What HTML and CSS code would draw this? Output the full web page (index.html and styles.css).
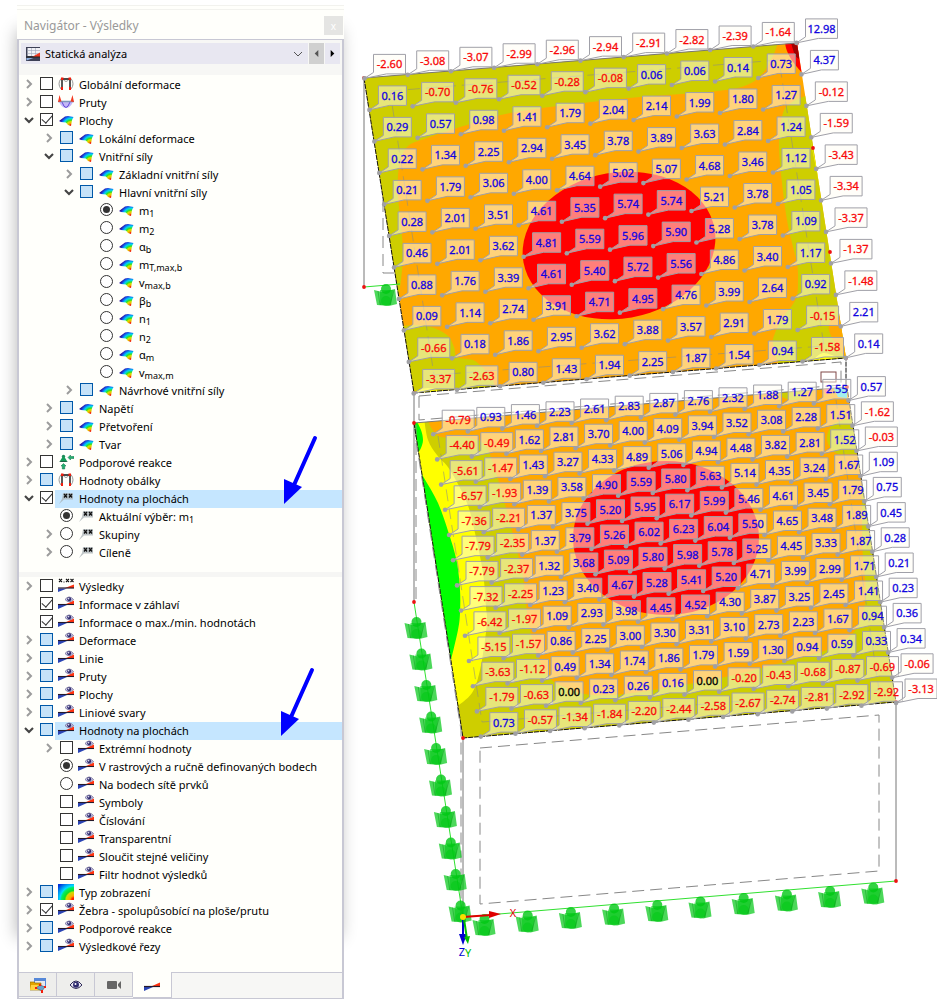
FILE: index.html
```html
<!DOCTYPE html>
<html lang="cs">
<head>
<meta charset="utf-8">
<title>Navigátor - Výsledky</title>
<link rel="stylesheet" href="styles.css">
</head>
<body>
<svg class="defs" aria-hidden="true">
  <defs>
    <radialGradient id="rain" gradientUnits="userSpaceOnUse" cx="13" cy="14" r="12">
      <stop offset=".1" stop-color="#f01000"/><stop offset=".2" stop-color="#f0a000"/><stop offset=".36" stop-color="#d8e000"/><stop offset=".48" stop-color="#30e020"/><stop offset=".64" stop-color="#00d8f0"/><stop offset=".8" stop-color="#1060f0"/><stop offset=".95" stop-color="#2a10a0"/>
    </radialGradient>
    <radialGradient id="corner" cx="1" cy="1" r="1.3">
      <stop offset=".1" stop-color="#f20"/><stop offset=".2" stop-color="#fa0"/><stop offset=".38" stop-color="#cd0"/><stop offset=".45" stop-color="#1d2"/><stop offset=".6" stop-color="#0e6"/><stop offset=".68" stop-color="#0df"/><stop offset="1" stop-color="#03d"/>
    </radialGradient>
    <symbol id="right" viewBox="0 0 10 10"><path d="M3 1l4 4-4 4" fill="none" stroke="#9c9c9c" stroke-width="2"/></symbol>
    <symbol id="down" viewBox="0 0 10 10"><path d="M1 3l4 4 4-4" fill="none" stroke="#444" stroke-width="2.1"/></symbol>
    <symbol id="surf" viewBox="0 0 16 16"><path d="M1 9L7 4.500 10 4l5.500 1L14 8l-1 6-3-1-2-2.500L3 10z" fill="url(#rain)"/></symbol>
    <symbol id="frame" viewBox="0 0 16 16"><path d="M3 2.500Q-1 8 3 13M13 2.500Q17 8 13 13M5 3q3 5 6 0" fill="none" stroke="#999"/><path d="M4 13V3h8v10" fill="none" stroke="#111" stroke-width="1.400"/><path d="M3 1.500h2.500v2.500H3zM10.500 1.500H13v2.500h-2.500zM3 11h2v3H3zM11 11h2v3h-2z" fill="#f21d0d"/></symbol>
    <symbol id="beam" viewBox="0 0 16 16"><path d="M1 8h14Q12 14 8 14T1 8z" fill="#c4b8f8"/><path d="M4 8q4 11 8 0" fill="none" stroke="#6347d8"/><path d="M0 7.500h16" stroke="#7d97ba" stroke-width="1.500"/><path d="M0 8L1.500 1l2 6.500zM12.500 7.500L14.500 1 16 8z" fill="#f43a20"/></symbol>
    <symbol id="support" viewBox="0 0 16 16"><circle cx="5.500" cy="2.500" r="1.700" fill="#1e8c58"/><path d="M4.500 3h2l2.500 4H2z" fill="#159b58"/><path d="M1 8l1.500-1h6L10 8z" fill="#1e6446"/><path d="M5.500 9.500L8 12H6.700v3H4.300v-3H3zM10 3.500L12.500 1v1.500H16v2h-3.500V6z" fill="#22b070" stroke="#0c7045" stroke-width=".5"/></symbol>
    <symbol id="pin" viewBox="0 0 16 16"><path d="M5 3h10v6.500H6L1 14l3-5z" fill="#a8b0b4" opacity=".75"/><path d="M6 4l3 3.500m0-3.500L6 7.500M11 4l3 3.500m0-3.500l-3 3.500" stroke="#111" stroke-width="1.300"/></symbol>
    <symbol id="wedge" viewBox="0 0 16 16"><path d="M0 10h9l-9 4z" fill="#2a44b4"/><path d="M7 9.500l9-4v4z" fill="#ff3210"/><path d="M0 9.500h16" stroke="#261a2a" stroke-width="1.200"/></symbol>
    <symbol id="eyewedge" viewBox="0 0 16 16"><path d="M0 9h9l-9 4z" fill="#2a44b4"/><path d="M7 8.500l9-4v4z" fill="#ff3210"/><path d="M0 8.500h16" stroke="#261a2a" stroke-width="1.100"/><path d="M7 3.500q4-5 8.500 0-4.500 4.500-8.500 0z" fill="#d5d0ef" stroke="#6a6690" stroke-width=".8"/><circle cx="11.200" cy="3.300" r="2" fill="#302c70"/><circle cx="10.700" cy="2.800" r=".7" fill="#fff"/></symbol>
    <symbol id="xwedge" viewBox="0 0 16 16"><path d="M0 10.500h9l-9 3.500z" fill="#2a44b4"/><path d="M7 10l9-3.500V10z" fill="#ff3210"/><path d="M0 10h16" stroke="#261a2a" stroke-width="1.200"/><path d="M1 1l3 3m0-3L1 4M8 1l3 3m0-3L8 4M12.500 1l3 3m0-3l-3 3M5.500 4h1" stroke="#111" stroke-width="1.100"/></symbol>
    <symbol id="spectrum" viewBox="0 0 16 16"><path d="M0 0h16v16H0z" fill="url(#corner)"/></symbol>
    <symbol id="eye" viewBox="0 0 16 16"><path d="M2 8q6-8 12 0-6 7-12 0z" fill="#eceaf6" stroke="#302c58"/><circle cx="8" cy="7.700" r="3" fill="#302c70"/><circle cx="7.500" cy="7" r="1" fill="#fff"/></symbol>
    <symbol id="camera" viewBox="0 0 16 16"><path d="M1 5q0-1 1-1h8q1 0 1 1v6q0 1-1 1H2q-1 0-1-1zM12 7l3-3v8l-3-3z" fill="#666"/></symbol>
    <symbol id="project" viewBox="0 0 16 16"><path d="M4 1h12v10H4z" fill="#5688d8"/><path d="M5 4h10v6H5z" fill="#e8e8ee"/><path d="M0 5h4l1 1h6v7H0z" fill="#e2a400" stroke="#9a7200" stroke-width=".7"/><path d="M1 8h10l-1 5H0z" fill="#ffd240"/><path d="M6 11l4-3 5 2-3 4z" fill="#6ba3cc" stroke="#456" stroke-width=".6"/><path d="M9 7h2v2H9zM14 9h2v2h-2zM5 10h2v2H5zM11 13h2v3h-2z" fill="#f21d0d"/></symbol>
    <symbol id="analysis" viewBox="0 0 16 16"><path d="M1 1h14v14H1z" fill="#3d4055"/><path d="M2.500 2H15v8H2.500z" fill="#f1f1f6"/><path d="M2.500 4.500H15M2.500 7.500H15M6.500 2v8M10.500 2v8" stroke="#a0a8bc" stroke-width=".6"/><path d="M7 11l8-4.500V11z" fill="#f03820"/><path d="M1 11h14" stroke="#222"/><path d="M1.500 12h7l-7 2.500z" fill="#8fb0e0"/></symbol>
  </defs>
</svg>
<aside class="panel">
  <header class="title"><h1>Navigátor - Výsledky</h1><button class="close" aria-label="Zavřít">x</button></header>
  <div class="frame">
    <div class="toolbar">
      <div class="combo"><svg class="icon"><use href="#analysis"/></svg><select aria-label="Typ výsledků"><option>Statická analýza</option></select><svg class="caret" viewBox="0 0 10 10"><path d="M1 3l4 4 4-4" fill="none" stroke="#555"/></svg></div>
      <button class="step off" aria-label="Předchozí"><svg viewBox="0 0 10 10"><path d="M7 1v8L3 5z" fill="#555"/></svg></button>
      <button class="step" aria-label="Další"><svg viewBox="0 0 10 10"><path d="M3 1v8l4-4z" fill="#000"/></svg></button>
    </div>
    <ul class="tree upper">
      <li><div class="row"><button class="tw" aria-label="Rozbalit"><svg><use href="#right"/></svg></button><label><input type="checkbox"><span class="cap"><svg class="icon"><use href="#frame"/></svg>Globální deformace</span></label></div></li>
      <li><div class="row"><button class="tw" aria-label="Rozbalit"><svg><use href="#right"/></svg></button><label><input type="checkbox"><span class="cap"><svg class="icon"><use href="#beam"/></svg>Pruty</span></label></div></li>
      <li><div class="row"><button class="tw" aria-label="Sbalit"><svg><use href="#down"/></svg></button><label><input type="checkbox" checked><span class="cap"><svg class="icon"><use href="#surf"/></svg>Plochy</span></label></div>
        <ul>
          <li><div class="row"><button class="tw" aria-label="Rozbalit"><svg><use href="#right"/></svg></button><label><input type="checkbox" class="part"><span class="cap"><svg class="icon"><use href="#surf"/></svg>Lokální deformace</span></label></div></li>
          <li><div class="row"><button class="tw" aria-label="Sbalit"><svg><use href="#down"/></svg></button><label><input type="checkbox" class="part"><span class="cap"><svg class="icon"><use href="#surf"/></svg>Vnitřní síly</span></label></div>
            <ul>
              <li><div class="row"><button class="tw" aria-label="Rozbalit"><svg><use href="#right"/></svg></button><label><input type="checkbox" class="part"><span class="cap"><svg class="icon"><use href="#surf"/></svg>Základní vnitřní síly</span></label></div></li>
              <li><div class="row"><button class="tw" aria-label="Sbalit"><svg><use href="#down"/></svg></button><label><input type="checkbox" class="part"><span class="cap"><svg class="icon"><use href="#surf"/></svg>Hlavní vnitřní síly</span></label></div>
                <ul>
                  <li><div class="row leaf"><label><input type="radio" name="force" checked><span class="cap"><svg class="icon"><use href="#surf"/></svg><span>m<sub>1</sub></span></span></label></div></li>
                  <li><div class="row leaf"><label><input type="radio" name="force"><span class="cap"><svg class="icon"><use href="#surf"/></svg><span>m<sub>2</sub></span></span></label></div></li>
                  <li><div class="row leaf"><label><input type="radio" name="force"><span class="cap"><svg class="icon"><use href="#surf"/></svg><span>α<sub>b</sub></span></span></label></div></li>
                  <li><div class="row leaf"><label><input type="radio" name="force"><span class="cap"><svg class="icon"><use href="#surf"/></svg><span>m<sub>T,max,b</sub></span></span></label></div></li>
                  <li><div class="row leaf"><label><input type="radio" name="force"><span class="cap"><svg class="icon"><use href="#surf"/></svg><span>v<sub>max,b</sub></span></span></label></div></li>
                  <li><div class="row leaf"><label><input type="radio" name="force"><span class="cap"><svg class="icon"><use href="#surf"/></svg><span>β<sub>b</sub></span></span></label></div></li>
                  <li><div class="row leaf"><label><input type="radio" name="force"><span class="cap"><svg class="icon"><use href="#surf"/></svg><span>n<sub>1</sub></span></span></label></div></li>
                  <li><div class="row leaf"><label><input type="radio" name="force"><span class="cap"><svg class="icon"><use href="#surf"/></svg><span>n<sub>2</sub></span></span></label></div></li>
                  <li><div class="row leaf"><label><input type="radio" name="force"><span class="cap"><svg class="icon"><use href="#surf"/></svg><span>α<sub>m</sub></span></span></label></div></li>
                  <li><div class="row leaf"><label><input type="radio" name="force"><span class="cap"><svg class="icon"><use href="#surf"/></svg><span>v<sub>max,m</sub></span></span></label></div></li>
                </ul>
              </li>
              <li><div class="row"><button class="tw" aria-label="Rozbalit"><svg><use href="#right"/></svg></button><label><input type="checkbox" class="part"><span class="cap"><svg class="icon"><use href="#surf"/></svg>Návrhové vnitřní síly</span></label></div></li>
            </ul>
          </li>
          <li><div class="row"><button class="tw" aria-label="Rozbalit"><svg><use href="#right"/></svg></button><label><input type="checkbox" class="part"><span class="cap"><svg class="icon"><use href="#surf"/></svg>Napětí</span></label></div></li>
          <li><div class="row"><button class="tw" aria-label="Rozbalit"><svg><use href="#right"/></svg></button><label><input type="checkbox" class="part"><span class="cap"><svg class="icon"><use href="#surf"/></svg>Přetvoření</span></label></div></li>
          <li><div class="row"><button class="tw" aria-label="Rozbalit"><svg><use href="#right"/></svg></button><label><input type="checkbox" class="part"><span class="cap"><svg class="icon"><use href="#surf"/></svg>Tvar</span></label></div></li>
        </ul>
      </li>
      <li><div class="row"><button class="tw" aria-label="Rozbalit"><svg><use href="#right"/></svg></button><label><input type="checkbox"><span class="cap"><svg class="icon"><use href="#support"/></svg>Podporové reakce</span></label></div></li>
      <li><div class="row"><button class="tw" aria-label="Rozbalit"><svg><use href="#right"/></svg></button><label><input type="checkbox" class="part"><span class="cap"><svg class="icon"><use href="#frame"/></svg>Hodnoty obálky</span></label></div></li>
      <li><div class="row picked"><button class="tw" aria-label="Sbalit"><svg><use href="#down"/></svg></button><label><input type="checkbox" checked><span class="cap"><svg class="icon"><use href="#pin"/></svg>Hodnoty na plochách</span></label></div>
        <ul>
          <li><div class="row leaf"><label><input type="radio" name="values" checked><span class="cap"><svg class="icon"><use href="#pin"/></svg><span>Aktuální výběr: m<sub>1</sub></span></span></label></div></li>
          <li><div class="row"><button class="tw" aria-label="Rozbalit"><svg><use href="#right"/></svg></button><label><input type="radio" name="values"><span class="cap"><svg class="icon"><use href="#pin"/></svg>Skupiny</span></label></div></li>
          <li><div class="row"><button class="tw" aria-label="Rozbalit"><svg><use href="#right"/></svg></button><label><input type="radio" name="values"><span class="cap"><svg class="icon"><use href="#pin"/></svg>Cíleně</span></label></div></li>
        </ul>
      </li>
    </ul>
    <ul class="tree lower">
      <li><div class="row"><button class="tw" aria-label="Rozbalit"><svg><use href="#right"/></svg></button><label><input type="checkbox"><span class="cap"><svg class="icon"><use href="#xwedge"/></svg>Výsledky</span></label></div></li>
      <li><div class="row leaf"><label><input type="checkbox" checked><span class="cap"><svg class="icon"><use href="#eyewedge"/></svg>Informace v záhlaví</span></label></div></li>
      <li><div class="row leaf"><label><input type="checkbox" checked><span class="cap"><svg class="icon"><use href="#eyewedge"/></svg>Informace o max./min. hodnotách</span></label></div></li>
      <li><div class="row"><button class="tw" aria-label="Rozbalit"><svg><use href="#right"/></svg></button><label><input type="checkbox" class="part"><span class="cap"><svg class="icon"><use href="#eyewedge"/></svg>Deformace</span></label></div></li>
      <li><div class="row"><button class="tw" aria-label="Rozbalit"><svg><use href="#right"/></svg></button><label><input type="checkbox" class="part"><span class="cap"><svg class="icon"><use href="#eyewedge"/></svg>Linie</span></label></div></li>
      <li><div class="row"><button class="tw" aria-label="Rozbalit"><svg><use href="#right"/></svg></button><label><input type="checkbox" class="part"><span class="cap"><svg class="icon"><use href="#eyewedge"/></svg>Pruty</span></label></div></li>
      <li><div class="row"><button class="tw" aria-label="Rozbalit"><svg><use href="#right"/></svg></button><label><input type="checkbox" class="part"><span class="cap"><svg class="icon"><use href="#eyewedge"/></svg>Plochy</span></label></div></li>
      <li><div class="row"><button class="tw" aria-label="Rozbalit"><svg><use href="#right"/></svg></button><label><input type="checkbox" class="part"><span class="cap"><svg class="icon"><use href="#eyewedge"/></svg>Liniové svary</span></label></div></li>
      <li><div class="row picked"><button class="tw" aria-label="Sbalit"><svg><use href="#down"/></svg></button><label><input type="checkbox" class="part"><span class="cap"><svg class="icon"><use href="#eyewedge"/></svg>Hodnoty na plochách</span></label></div>
        <ul>
          <li><div class="row"><button class="tw" aria-label="Rozbalit"><svg><use href="#right"/></svg></button><label><input type="checkbox"><span class="cap"><svg class="icon"><use href="#eyewedge"/></svg>Extrémní hodnoty</span></label></div></li>
          <li><div class="row leaf"><label><input type="radio" name="points" checked><span class="cap"><svg class="icon"><use href="#eyewedge"/></svg>V rastrových a ručně definovaných bodech</span></label></div></li>
          <li><div class="row leaf"><label><input type="radio" name="points"><span class="cap"><svg class="icon"><use href="#eyewedge"/></svg>Na bodech sítě prvků</span></label></div></li>
          <li><div class="row leaf"><label><input type="checkbox"><span class="cap"><svg class="icon"><use href="#eyewedge"/></svg>Symboly</span></label></div></li>
          <li><div class="row leaf"><label><input type="checkbox"><span class="cap"><svg class="icon"><use href="#eyewedge"/></svg>Číslování</span></label></div></li>
          <li><div class="row leaf"><label><input type="checkbox"><span class="cap"><svg class="icon"><use href="#eyewedge"/></svg>Transparentní</span></label></div></li>
          <li><div class="row leaf"><label><input type="checkbox"><span class="cap"><svg class="icon"><use href="#eyewedge"/></svg>Sloučit stejné veličiny</span></label></div></li>
          <li><div class="row leaf"><label><input type="checkbox"><span class="cap"><svg class="icon"><use href="#eyewedge"/></svg>Filtr hodnot výsledků</span></label></div></li>
        </ul>
      </li>
      <li><div class="row"><button class="tw" aria-label="Rozbalit"><svg><use href="#right"/></svg></button><label><input type="checkbox" class="part"><span class="cap"><svg class="icon"><use href="#spectrum"/></svg>Typ zobrazení</span></label></div></li>
      <li><div class="row"><button class="tw" aria-label="Rozbalit"><svg><use href="#right"/></svg></button><label><input type="checkbox" checked><span class="cap"><svg class="icon"><use href="#eyewedge"/></svg>Žebra - spolupůsobící na ploše/prutu</span></label></div></li>
      <li><div class="row"><button class="tw" aria-label="Rozbalit"><svg><use href="#right"/></svg></button><label><input type="checkbox" class="part"><span class="cap"><svg class="icon"><use href="#eyewedge"/></svg>Podporové reakce</span></label></div></li>
      <li><div class="row"><button class="tw" aria-label="Rozbalit"><svg><use href="#right"/></svg></button><label><input type="checkbox" class="part"><span class="cap"><svg class="icon"><use href="#eyewedge"/></svg>Výsledkové řezy</span></label></div></li>
    </ul>
    <nav class="tabs">
      <button aria-label="Data"><svg class="icon"><use href="#project"/></svg></button>
      <button aria-label="Zobrazit"><svg class="icon"><use href="#eye"/></svg></button>
      <button aria-label="Pohledy"><svg class="icon"><use href="#camera"/></svg></button>
      <button aria-label="Výsledky" class="active"><svg class="icon"><use href="#wedge"/></svg></button>
    </nav>
  </div>
  <svg class="pointer first" viewBox="0 0 34 70"><path d="M31 3L10 50" stroke="#00f" stroke-width="4" stroke-linecap="round"/><path d="M0 69V44l18 8z" fill="#00f"/></svg>
  <svg class="pointer second" viewBox="0 0 34 70"><path d="M31 3L10 50" stroke="#00f" stroke-width="4" stroke-linecap="round"/><path d="M0 69V44l18 8z" fill="#00f"/></svg>
</aside>
<main class="stage"><svg id="model" viewBox="344 0 593 1003" role="img" aria-label="Ohybové momenty m1 na plochách"></svg></main>
<script src="model.js"></script>
</body>
</html>
```

FILE: styles.css
```css
* { box-sizing: border-box; }
body {
  margin: 0;
  display: flex;
  align-items: flex-start;
  background: #fff;
  color: #000;
  font: 11px/18px "Noto Sans", "Open Sans", sans-serif;
}
button { border: 0; padding: 0; background: none; font: inherit; }
.defs { position: absolute; width: 0; height: 0; }

.panel {
  position: relative;
  flex: 0 0 327px;
  margin: 5px 0 0 17px;
  border-top: 1px solid #f2f2ee;
  background: #fffffb;
}
.panel::before {
  content: "";
  position: absolute;
  z-index: -1;
  inset: 24px 4px 62px 0;
  box-shadow: 0 0 16px rgba(0, 0, 0, .3);
}
.title {
  display: flex;
  justify-content: space-between;
  align-items: center;
  margin-top: 3px;
  border-top: 1px solid #f2f2ee;
  padding: 6px 1px 4px 7px;
}
.title h1 { margin: 0; font-size: 12px; font-weight: 400; line-height: 17px; color: #999; }
.close { width: 19px; height: 19px; background: #e5e5e3; color: #fff; font-size: 10px; line-height: 16px; }

.frame { border: 2px solid #c8c8d4; border-width: 1px 2px 1px 2px; }
.toolbar { display: flex; gap: 1px; padding: 3px 2px 11px; background: #f7f7f5; }
.combo { display: flex; align-items: center; flex: 1; height: 21px; padding: 0 5px 0 4px; gap: 4px; background: #e8e7f1; }
.combo select { flex: 1; appearance: none; border: 0; padding: 0; background: none; color: #000; font: inherit; }
.caret { width: 10px; height: 10px; }
.step { display: grid; place-items: center; width: 15px; height: 21px; background: #e8e7f1; }
.step.off { background: #d0d0d0; }
.step svg { width: 9px; height: 9px; }

.icon { flex: none; width: 16px; height: 16px; }
.tree, .tree ul { margin: 0; padding: 0; list-style: none; }
.tree ul { padding-left: 20px; }
.upper { padding: 1px 0 10px; }
.lower { padding: 1px 0 16px; border-top: 5px solid #f6f6f4; }
.row { display: flex; height: 18px; }
.leaf { padding-left: 21px; }
.tw { display: grid; place-items: center; width: 20px; height: 16px; margin-right: 1px; }
.tw svg { width: 10px; height: 10px; }
.row label { display: flex; flex: 1; }
.row input { appearance: none; flex: none; display: grid; place-items: center; width: 13px; height: 13px; margin: 1px 2px 0 0; border: 1px solid #333; background: #fff; }
.row input[type="radio"] { border-radius: 50%; }
.row input[type="radio"]:checked::after { content: ""; width: 7px; height: 7px; border-radius: 50%; background: #333; }
.row input[type="checkbox"]:checked::after { content: ""; width: 9px; height: 5px; margin-bottom: 3px; border: solid #333; border-width: 0 0 1px 1px; transform: rotate(-48deg); }
.row input.part { border-color: #0058a8; background: #c5e2f8; }
.cap { display: flex; align-items: center; flex: 1; gap: 5px; padding-left: 3px; white-space: nowrap; line-height: 18px; }
.cap .icon { margin-bottom: 2px; }
.picked .cap { background: #c5e6ff; }
sub { font-size: 9px; line-height: 0; vertical-align: -2px; }

.tabs { display: flex; border-top: 1px solid #c8c8d4; background: #f7f7f5; height: 26px; }
.tabs button { display: grid; place-items: center; width: 38px; height: 24px; border: 1px solid #c8c8d4; border-width: 0 1px 1px 0; background: #eeeeec; }
.tabs .active { width: 39px; height: 26px; margin-top: -1px; background: #fffffb; }

.pointer { position: absolute; width: 34px; height: 70px; }
.first { left: 267px; top: 429px; }
.second { left: 264px; top: 661px; }

.stage { flex: 1; min-width: 0; }
#model { display: block; width: 100%; height: auto; }
#model text { font: 11px "Noto Sans", "Open Sans", sans-serif; text-anchor: middle; }
#model .pos { fill: #1004e0; stroke: #1004e0; }
#model .neg { fill: #f80808; stroke: #f80808; }
#model .zero { fill: #000; stroke: #000; }
#model .value { stroke-width: .3; }
#model .tag { fill: #fffdf4; fill-opacity: .5; stroke: #a0a0a8; }
#model .dash { fill: none; stroke: #888; stroke-dasharray: 12 6; }
#model .faint { fill: none; stroke: #888; stroke-opacity: .55; stroke-dasharray: 12 6; }
#model .line { fill: none; stroke: #777; }
#model .edge { fill: none; stroke: #111; stroke-dasharray: 5 1; }
```

FILE: model.js
```javascript
const NS = "http://www.w3.org/2000/svg";
const model = document.getElementById("model");

function add(name, attrs, parent = model) {
  const node = document.createElementNS(NS, name);
  for (const key in attrs) node.setAttribute(key, attrs[key]);
  parent.append(node);
  return node;
}

const parse = text => text.split(" ").map(pair => pair.split(",").map(Number));

// Curve through all the points (Catmull-Rom to Bezier).
function curve(text, closed) {
  const p = parse(text), n = p.length;
  const at = i => closed ? p[(i + n) % n] : p[Math.max(0, Math.min(n - 1, i))];
  let d = "";
  for (let i = 0; i < (closed ? n : n - 1); i++) {
    const [a, b, c, e] = [at(i - 1), at(i), at(i + 1), at(i + 2)];
    d += `C${b[0] + (c[0] - a[0]) / 6} ${b[1] + (c[1] - a[1]) / 6} ${c[0] - (e[0] - b[0]) / 6} ${c[1] - (e[1] - b[1]) / 6} ${c[0]} ${c[1]}`;
  }
  return `M${p[0]}${d}`;
}

function zone(fill, bow, rest = "", parent = model) {
  add("path", { d: curve(bow, !rest) + (rest ? "L" + rest.split(" ").join("L") : "") + "Z", fill }, parent);
}

function clipped(id, points) {
  add("polygon", { points }, add("clipPath", { id }));
  return add("g", { "clip-path": `url(#${id})` });
}

const OLIVE = "#cece00", ORANGE = "#ffa800", RED = "#ff0000", YELLOW = "#ffff00", GREEN = "#00ff00";

// Upper slab
const upper = clipped("upper", "364,78 797,43 846,358 414,393");
add("rect", { x: 350, y: 30, width: 510, height: 380, fill: ORANGE }, upper);
zone(OLIVE, "398,300 401,280 403,253 401,225 398,195 399,167 407,147 427,138 467,125 510,113 583,103 640,97 717,91 747,85 763,73 773,56 779,40", "350,40 350,300", upper);
zone(OLIVE, "400,326 427,326 447,335 454,347 457,357 473,360 482,367 492,378 497,395", "400,400", upper);
zone(YELLOW, "414,392 428,388 445,392", "414,396", upper);
zone(OLIVE, "808,95 792,102 783,113 779,143 782,183 787,220 792,243 797,263 798,280 796,299 783,317 775,333 773,345 780,368", "860,368 860,95", upper);
zone(ORANGE, "840,316 831,320 829,330 836,345 845,358", "860,358", upper);
zone(YELLOW, "810,138 814,158 822,200 832,268", "840,268", upper);
zone(YELLOW, "812,361 823,353 837,357", "837,362", upper);
zone(RED, "785,43 787,51 793,62 804,75", "806,40", upper);
zone("#a00000", "791,43 795,55 799,59", "799,40", upper);
add("ellipse", { rx: 97, ry: 73, transform: "translate(619 245.500) rotate(-10)", fill: RED });

// Lower slab
const lower = clipped("lower", "414,423 847,387 896,702 463,738");
add("rect", { x: 400, y: 370, width: 510, height: 380, fill: ORANGE }, lower);
zone(OLIVE, "427,418 432,429 441,437 460,437 483,443 493,463 503,497 510,523 517,550 523,577 525,597 530,630 538,657 550,678 564,687 592,695 640,692 720,678 773,665 827,650 853,633 863,612 866,590 863,560 862,523 862,485", "910,485 910,750 400,750 400,418", lower);
zone(YELLOW, "424,418 428,440 437,455 450,470 467,503 475,533 483,573 486,607 487,620 485,640 480,670 472,693 455,708", "400,700 400,418", lower);
zone(GREEN, "416,420 421,430 423,440 421,448 418,453", "400,453 400,420", lower);
zone(GREEN, "416,463 424,478 438,503 450,537 457,563 460,590 460,613 458,630 451,660", "400,660", lower);
zone(OLIVE, "827,440 830,428 838,422 862,420 862,450 846,454 834,452", "", lower);
zone(OLIVE, "778,388 784,398 800,399 809,386", "778,386", lower);
add("path", { d: "M833 387h14v11l-9-1z", fill: "#45dfe8" }, lower);
add("circle", { cx: 828, cy: 390, r: 4, fill: "#ff6c6c" }, lower);
add("ellipse", { cx: 666, cy: 538, rx: 93, ry: 77, fill: RED });

// Outlines and inset lines
const lines = [
  ["line", "364,78 364,287"], ["edge", "364,78 414,393 846,358 846,387"],
  ["line", "364,78 797,43"], ["faint", "390,91 779,60 824,346 434,375 390,91"],
  ["dash", "383,200 383,273 396,273"],
  ["line", "414,393 414,602"], ["dash", "416,425 416,602"],
  ["dash", "419,396 841,362 841,385 419,420 419,396"], ["line", "414,423 847,387"],
  ["faint", "438,436 482,722 879,690 836,400"],
  ["edge", "414,423 463,738 896,702 847,387"],
  ["dash", "416,440 461,730 461,915"],
  ["line", "463,738 463,917"], ["line", "896,702 896,881"],
  ["dash", "480,748 879,715 879,871 480,904 480,748"]
];
for (const [kind, points] of lines) add("polyline", { class: kind, points });
add("rect", { x: 821, y: 372, width: 15, height: 10, fill: "none", stroke: "#804848" });
for (const points of ["364,287 400,284", "414,602 463,917 896,881"])
  add("polyline", { points, fill: "none", stroke: "#30e030" });

// Line supports
function support(x, y) {
  const g = add("g", { transform: `translate(${x} ${y})`, fill: "#00c814" });
  add("path", { d: "M-12-6L-4-4 9-7 11 8 3 10-9 9z", "fill-opacity": .7 }, g);
  add("path", { d: "M-6-6L7-6 5 9-6 9z", "fill-opacity": .6 }, g);
  add("circle", { cy: -7, r: 5, "fill-opacity": .8 }, g);
  add("circle", { cy: 5, r: 5, "fill-opacity": .5 }, g);
  add("path", { d: "M-8-5l2 14M8-6L4 9", stroke: "#079c18", "stroke-opacity": .5 }, g);
}
support(386, 296);
for (let i = 0; i < 10; i++) {
  support(416.5 + 4.9 * i, 629 + 31.5 * i);
  support(484.5 + 43.2 * i, 926 - 3.5 * i);
}
for (const [cx, cy] of parse("364,78 364,287 414,393 414,423 414,602 463,738 896,702 896,881 797,43 846,358 847,387 813,148 830,252"))
  add("circle", { cx, cy, r: 1.9, fill: "#ee1111" });

// Value tags
function tags(values, [x0, y0], [cx, cy], [rx, ry]) {
  values.trim().split("\n").forEach((line, r) => line.trim().split(/\s+/).forEach((value, c) => {
    const x = x0 + cx * c + rx * r, y = y0 + cy * c + ry * r;
    const wide = value.length > 4, w = wide ? 32 : 28;
    add("path", { class: "tag", d: `M${x} ${y}L${x + 9} ${y - 6}V${y - 24}h${w}v19.500h${-w / 2 - 3}Z` });
    add("circle", { cx: x, cy: y, r: 2.3, fill: "#a0a0a4" });
    const kind = value === "0.00" ? "zero" : value[0] === "-" ? "neg" : "pos";
    add("text", { class: "value " + kind, x: x + 9 + w / 2, y: y - 10 }).textContent = value;
  }));
}

tags(`
-2.60 -3.08 -3.07 -2.99 -2.96 -2.94 -2.91 -2.82 -2.39 -1.64 12.98
0.16 -0.70 -0.76 -0.52 -0.28 -0.08 0.06 0.06 0.14 0.73 4.37
0.29 0.57 0.98 1.41 1.79 2.04 2.14 1.99 1.80 1.27 -0.12
0.22 1.34 2.25 2.94 3.45 3.78 3.89 3.63 2.84 1.24 -1.59
0.21 1.79 3.06 4.00 4.64 5.02 5.07 4.68 3.46 1.12 -3.43
0.28 2.01 3.51 4.61 5.35 5.74 5.74 5.21 3.78 1.05 -3.34
0.46 2.01 3.62 4.81 5.59 5.96 5.90 5.28 3.78 1.09 -3.37
0.88 1.76 3.39 4.61 5.40 5.72 5.56 4.86 3.40 1.17 -1.37
0.09 1.14 2.74 3.91 4.71 4.95 4.76 3.99 2.64 0.92 -1.48
-0.66 0.18 1.86 2.95 3.62 3.88 3.57 2.91 1.79 -0.15 2.21
-3.37 -2.63 0.80 1.43 1.94 2.25 1.87 1.54 0.94 -1.58 0.14
`, [364.5, 78.4], [43.2, -3.55], [4.92, 31.5]);

tags(`
-0.79 0.93 1.46 2.23 2.61 2.83 2.87 2.76 2.32 1.88 1.27 2.55 0.57
-4.40 -0.49 1.62 2.81 3.70 4.00 4.09 3.94 3.52 3.08 2.28 1.51 -1.62
-5.61 -1.47 1.43 3.27 4.33 4.89 5.06 4.94 4.48 3.82 2.81 1.52 -0.03
-6.57 -1.93 1.39 3.58 4.90 5.59 5.80 5.63 5.14 4.35 3.24 1.67 1.09
-7.36 -2.21 1.37 3.75 5.20 5.95 6.17 5.99 5.46 4.61 3.45 1.79 0.75
-7.79 -2.35 1.37 3.79 5.26 6.02 6.23 6.04 5.50 4.65 3.48 1.89 0.45
-7.79 -2.37 1.32 3.68 5.09 5.80 5.98 5.78 5.25 4.45 3.33 1.87 0.28
-7.32 -2.25 1.23 3.40 4.67 5.28 5.41 5.20 4.71 3.99 2.99 1.71 0.21
-6.42 -1.97 1.09 2.93 3.98 4.45 4.52 4.30 3.87 3.25 2.45 1.41 0.23
-5.15 -1.57 0.86 2.25 3.00 3.30 3.31 3.10 2.73 2.23 1.67 0.94 0.36
-3.63 -1.12 0.49 1.34 1.74 1.86 1.79 1.59 1.30 0.94 0.59 0.33 0.34
-1.79 -0.63 0.00 0.23 0.26 0.16 0.00 -0.20 -0.43 -0.68 -0.87 -0.69 -0.06
0.73 -0.57 -1.34 -1.84 -2.20 -2.44 -2.58 -2.67 -2.74 -2.81 -2.92 -2.92 -3.13
`, [433.2, 434.2], [34.6, -2.8], [3.97, 25.2]);

// Axis cross
add("path", { d: "M463 917l28-2", stroke: "#e00000", "stroke-width": 2 });
add("path", { d: "M489 911l12 3-12 4z", fill: "#e00000" });
add("path", { d: "M463 917v20", stroke: "#0000d0", "stroke-width": 2 });
add("path", { d: "M459 934h8l-4 11z", fill: "#0000d0" });
add("path", { d: "M464 919l3 20", stroke: "#00c000", "stroke-width": 2 });
add("path", { d: "M464 937l6-1-2 8z", fill: "#00c000" });
add("circle", { cx: 463, cy: 917, r: 3, fill: "#f8e000" });
add("text", { x: 513, y: 917, fill: "#e00000" }).textContent = "X";
add("text", { x: 468, y: 957, fill: "#00c000" }).textContent = "Y";
add("text", { x: 462, y: 956, fill: "#0000d0" }).textContent = "Z";
```
